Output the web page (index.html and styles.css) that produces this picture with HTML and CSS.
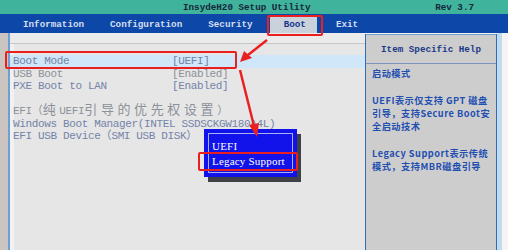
FILE: index.html
```html
<!DOCTYPE html>
<html lang="zh">
<head>
    <meta charset="UTF-8">
    <title>InsydeH20 Setup Utility</title>
    <link rel="stylesheet" href="styles.css">
</head>
<body>
    <div class="screen">
        <div class="titlebar">
            <span class="title">InsydeH20 Setup Utility</span>
            <span class="rev">Rev 3.7</span>
        </div>
        <nav class="menubar">
            <span class="tab">Information</span>
            <span class="tab">Configuration</span>
            <span class="tab">Security</span>
            <span class="tab active">Boot</span>
            <span class="tab exit">Exit</span>
        </nav>
        <div class="main">
            <div class="frame"></div>
            <section class="setup">
                <div class="band"></div>
                <div class="rows">
                    <div class="row sel"><span>Boot Mode</span><span>[UEFI]</span></div>
                    <div class="row grey"><span>USB Boot</span><span>[Enabled]</span></div>
                    <div class="row"><span>PXE Boot to LAN</span><span>[Enabled]</span></div>
                    <div class="row"></div>
                    <div class="row grey"><span>EFI<span class="cp">（</span><span class="cn">纯</span>UEFI<span class="cn">引导的优先权设置</span><span class="cp">）</span></span></div>
                    <div class="row"><span>Windows Boot Manager(INTEL SSDSCKGW180A4L)</span></div>
                    <div class="row"><span>EFI USB Device<span class="cp">（</span>SMI USB DISK<span class="cp">）</span></span></div>
                </div>
            </section>
            <aside class="help">
                <div class="help-head">Item Specific Help</div>
                <div class="help-body">
                    <p>启动模式</p>
                    <p>UEFI表示仅支持 GPT 磁盘<br>引导，支持Secure Boot安<br>全启动技术</p>
                    <p>Legacy Support表示传统<br>模式，支持MBR磁盘引导</p>
                </div>
            </aside>
            <div class="edge"></div>
        </div>

        <div class="popup">
            <div class="opt">UEFI</div>
            <div class="opt">Legacy Support</div>
        </div>

        <div class="mark mark-tab"></div>
        <div class="mark mark-row"></div>
        <div class="mark mark-opt"></div>

        <svg class="arrows" width="508" height="250" viewBox="0 0 508 250">
            <line x1="267" y1="40" x2="248" y2="55" stroke="#ea1f1f" stroke-width="2.4"/>
            <polygon points="240,62 244,51 252,58" fill="#ea1f1f"/>
            <line x1="240" y1="70" x2="254" y2="126" stroke="#ea1f1f" stroke-width="2.4"/>
            <polygon points="257,137 249,125 259,123" fill="#ea1f1f"/>
        </svg>
    </div>
</body>
</html>
```

FILE: styles.css
```css
body {
    margin: 0;
    background-color: #f4f4f4;
}
.screen {
    position: relative;
    width: 508px;
    height: 250px;
    overflow: hidden;
    font-family: "Liberation Mono", "Noto Sans CJK SC", monospace;
}
.titlebar {
    display: flex;
    align-items: center;
    height: 14px;
    background-color: #3fb39b;
    color: #17263a;
    font-size: 9.25px;
    font-weight: bold;
}
.title {
    margin-left: 183px;
}
.rev {
    margin-left: auto;
    margin-right: 34px;
}
.menubar {
    display: flex;
    align-items: flex-end;
    height: 19px;
    padding-left: 10px;
    background-color: #0d48a8;
    font-size: 9.25px;
    font-weight: bold;
}
.tab {
    display: flex;
    align-items: center;
    height: 17px;
    padding: 0 13px;
    color: #d6def0;
}
.tab.active {
    margin-left: 4px;
    padding: 0 11px 0 14px;
    background-color: #c9d1da;
    color: #14358a;
}
.tab.exit {
    margin-left: 6px;
}
.main {
    display: flex;
    height: 217px;
}
.frame {
    width: 8px;
    background-color: #cac5c0;
}
.setup {
    width: 355px;
    background-color: #e6e6e6;
    border-left: 2px solid #6f9fd0;
    box-shadow: inset 4px 0 0 #eff1f3;
}
.band {
    height: 10px;
    background-color: #ebebeb;
    border-bottom: 1px solid #c6c6c6;
    margin-bottom: 11px;
}
.row {
    display: grid;
    grid-template-columns: 159px auto;
    height: 12.5px;
    padding-left: 3px;
    line-height: 12.5px;
    font-size: 11px;
    letter-spacing: -0.36px;
    color: #7483a8;
    white-space: nowrap;
}
.row.grey {
    color: #8d9199;
}
.row.sel {
    background-color: #cfe7f8;
}
.cn {
    font-size: 13px;
    letter-spacing: 3.6px;
}
.cp {
    font-size: 11px;
    letter-spacing: 0;
}
.help {
    width: 130px;
    margin-top: 1px;
    background-color: #cdcdcd;
    border-left: 1.5px solid #2f6db8;
    border-right: 1.5px solid #2f6db8;
}
.help-head {
    height: 19px;
    padding-top: 9px;
    border-top: 1.5px solid #6f9ccc;
    border-bottom: 1px solid #7b96ba;
    text-align: center;
    font-size: 9.25px;
    font-weight: bold;
    color: #1c3a88;
}
.help-body {
    padding: 3px 0 0 6px;
    font-family: "Noto Sans CJK SC", sans-serif;
    font-size: 9.2px;
    font-weight: bold;
    letter-spacing: 0.5px;
    line-height: 13.3px;
    color: #1f4fb0;
    white-space: nowrap;
}
.help-body p {
    margin: 0 0 13.3px;
}
.edge {
    width: 5px;
    background-color: #c3d9ee;
}
.popup {
    position: absolute;
    left: 204px;
    top: 129px;
    width: 85px;
    height: 38.5px;
    padding: 9.5px 0 0 8px;
    background-color: #1212ea;
    box-shadow: 4px 5px 0 #404048;
    font-family: "Liberation Serif", serif;
    font-size: 11px;
    letter-spacing: 0.2px;
    line-height: 15px;
    color: #ffffff;
}
.popup::before {
    content: "";
    position: absolute;
    left: 4px;
    top: 4px;
    right: 4px;
    bottom: 4px;
    border: 1px solid #a9b0ee;
}
.mark {
    position: absolute;
    border: 2px solid #ea1f1f;
    border-radius: 2px;
}
.mark-tab {
    left: 267px;
    top: 15px;
    width: 52px;
    height: 17px;
}
.mark-row {
    left: 5px;
    top: 51px;
    width: 228px;
    height: 14px;
}
.mark-opt {
    left: 198px;
    top: 152px;
    width: 96px;
    height: 15px;
}
.arrows {
    position: absolute;
    left: 0;
    top: 0;
}
```
